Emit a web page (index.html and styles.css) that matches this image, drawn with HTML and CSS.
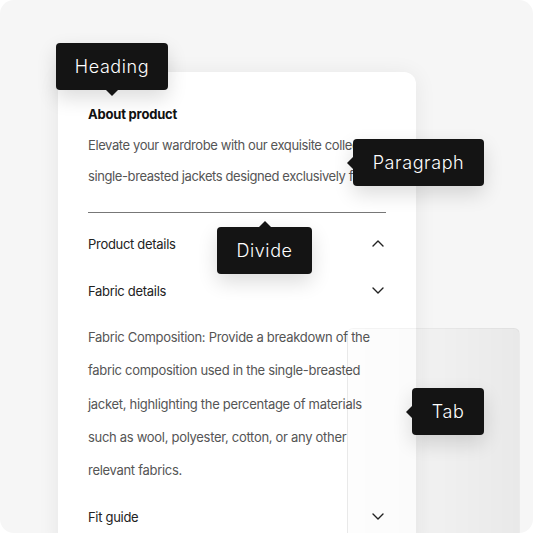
FILE: index.html
```html
<!DOCTYPE html>
<html lang="en">
<head>
    <meta charset="UTF-8">
    <meta name="viewport" content="width=device-width, initial-scale=1.0">
    <title>Accordion anatomy</title>

    <link rel="stylesheet" href="styles.css">
</head>
<body>
    <main class="frame">

        <section class="card">
            <h2 class="card-title">About product</h2>
            <p class="intro">Elevate your wardrobe with our exquisite collection of<br>single-breasted jackets designed exclusively for you.</p>
            <hr class="divider">

            <div class="row">
                <span>Product details</span>
                <svg class="chevron" width="12" height="7" viewBox="0 0 12 7"><path d="M1 6 L6 1 L11 6"/></svg>
            </div>
            <div class="row">
                <span>Fabric details</span>
                <svg class="chevron" width="12" height="7" viewBox="0 0 12 7"><path d="M1 1 L6 6 L11 1"/></svg>
            </div>
            <p class="body">Fabric Composition: Provide a breakdown of the fabric composition used in the single-breasted jacket, highlighting the percentage of materials such as wool, polyester, cotton, or any other relevant fabrics.</p>
            <div class="row">
                <span>Fit guide</span>
                <svg class="chevron" width="12" height="7" viewBox="0 0 12 7"><path d="M1 1 L6 6 L11 1"/></svg>
            </div>
        </section>

        <div class="ghost-card"></div>

        <div class="tip tip-heading arrow-down">Heading</div>
        <div class="tip tip-paragraph arrow-left">Paragraph</div>
        <div class="tip tip-divide arrow-up">Divide</div>
        <div class="tip tip-tab arrow-left">Tab</div>

    </main>
</body>
</html>
```

FILE: styles.css
```css
* {
    box-sizing: border-box;
}

body {
    margin: 0;
    background-color: white;
    font-family: Inter, "Liberation Sans", sans-serif;
}

.frame {
    position: relative;
    width: 533px;
    height: 533px;
    overflow: hidden;
    background-color: #f6f6f6;
    border-radius: 14px;
    padding-top: 72px;
    padding-left: 58px;
}

.card {
    width: 358px;
    min-height: 480px;
    background-color: white;
    border-radius: 12px 12px 0 0;
    padding: 33px 30px 0 30px;
    box-shadow: 0px 2px 22px 0px rgba(0,0,0,0.07);
}

.card-title {
    margin: 0;
    font-size: 13px;
    line-height: 18px;
    font-weight: 700;
    color: #111;
    letter-spacing: -0.2px;
}

.intro {
    margin: 7px 0 0 0;
    font-size: 13px;
    line-height: 31px;
    color: #555;
    letter-spacing: -0.4px;
    white-space: nowrap;
}

.divider {
    margin: 20px 0 0 0;
    border: none;
    border-top: 1px solid #777;
}

.row {
    display: flex;
    align-items: center;
    justify-content: space-between;
    height: 47px;
    font-size: 13px;
    color: #222;
    letter-spacing: -0.3px;
}

.row:first-of-type {
    margin-top: 7px;
}

.chevron {
    margin-right: 2px;
    fill: none;
    stroke: #222;
    stroke-width: 1.4;
    stroke-linecap: round;
    stroke-linejoin: round;
}

.body {
    margin: 7px 0 6px 0;
    font-size: 13px;
    line-height: 33.3px;
    color: #555;
    letter-spacing: -0.3px;
}

.ghost-card {
    position: absolute;
    left: 347px;
    top: 328px;
    width: 173px;
    height: 240px;
    border-radius: 6px;
    border: 1px solid rgba(0,0,0,0.04);
    background: linear-gradient(90deg, rgba(0,0,0,0.008) 0%, rgba(0,0,0,0.015) 40%, rgba(0,0,0,0.05) 100%);
}

.tip {
    position: absolute;
    display: flex;
    align-items: center;
    justify-content: center;
    height: 47px;
    background-color: #141414;
    color: white;
    border-radius: 4px;
    font-size: 18px;
    font-weight: 300;
    letter-spacing: 0.6px;
    box-shadow: 0px 8px 20px 0px rgba(0,0,0,0.14);
}

.tip::after {
    content: "";
    position: absolute;
    border: 6px solid transparent;
}

.arrow-down::after {
    top: 100%;
    left: 50%;
    margin-left: -6px;
    border-top-color: #141414;
}

.arrow-up::after {
    bottom: 100%;
    left: 50%;
    margin-left: -6px;
    border-bottom-color: #141414;
}

.arrow-left::after {
    right: 100%;
    top: 50%;
    margin-top: -6px;
    border-right-color: #141414;
}

.tip-heading {
    left: 56px;
    top: 43px;
    width: 112px;
}

.tip-paragraph {
    left: 353px;
    top: 139px;
    width: 131px;
}

.tip-divide {
    left: 217px;
    top: 227px;
    width: 95px;
}

.tip-tab {
    left: 412px;
    top: 388px;
    width: 72px;
}
```
